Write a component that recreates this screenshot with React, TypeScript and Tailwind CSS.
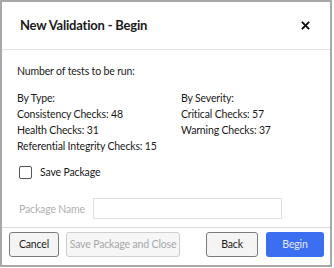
export default function App() {
  return (
    <div className="w-[334px] h-[268px] bg-white" style={{ fontFamily: 'Lato, "Noto Sans", sans-serif' }}>
      <div className="w-[332px] h-[267px] border-2 border-[#a8a8a8] flex flex-col text-[#1a1a1a]">
        {/* header */}
        <div className="h-[48px] flex items-center justify-between pl-[18px] pr-[20px] border-b border-[#e3e3e3]">
          <h1 className="text-[13px] font-bold tracking-[-0.2px] whitespace-nowrap">New Validation - Begin</h1>
          <svg className="w-[9px] h-[9px]" viewBox="0 0 10 10" fill="none" stroke="#111" strokeWidth="2.2">
            <path d="M1 1l8 8M9 1l-8 8" />
          </svg>
        </div>

        {/* body */}
        <div className="flex-1 pl-[15px] pt-[13px] text-[10.5px] tracking-[-0.15px] leading-[16px] whitespace-nowrap">
          <p>Number of tests to be run:</p>
          <div className="grid grid-cols-[164px_1fr] mt-[11px]">
            <div>
              <p>By Type:</p>
              <p>Consistency Checks: 48</p>
              <p>Health Checks: 31</p>
              <p>Referential Integrity Checks: 15</p>
            </div>
            <div>
              <p>By Severity:</p>
              <p>Critical Checks: 57</p>
              <p>Warning Checks: 37</p>
            </div>
          </div>
          <label className="flex items-center gap-[8px] mt-[10px] ml-[2px]">
            <span className="w-[13px] h-[13px] border border-[#555] rounded-[2px] bg-white" />
            <span>Save Package</span>
          </label>
          <div className="flex items-center mt-[18px] ml-[2px] gap-[8px]">
            <span className="w-[66px] text-[#b0b0b0]">Package Name</span>
            <div className="w-[189px] h-[21px] border border-[#e0e0e0]" />
          </div>
        </div>

        {/* footer */}
        <div className="h-[38px] border-t border-[#dcdcdc] flex items-start pt-[4px] pl-[7px] text-[10.5px] tracking-[-0.15px] whitespace-nowrap">
          <button className="w-[50px] h-[25px] rounded-[3px] border border-[#7a7a7a] bg-[#f4f4f4]">Cancel</button>
          <button className="ml-[7px] w-[114px] h-[25px] rounded-[3px] border border-[#cfcfcf] bg-[#f6f6f6] text-[#a8a8a8]">
            Save Package and Close
          </button>
          <button className="ml-[26px] w-[52px] h-[25px] rounded-[3px] border border-[#7a7a7a] bg-[#f4f4f4]">Back</button>
          <button className="ml-[8px] w-[58px] h-[25px] rounded-[3px] bg-[#3c6ef2] text-[#e4eafc]">Begin</button>
        </div>
      </div>
    </div>
  );
}
